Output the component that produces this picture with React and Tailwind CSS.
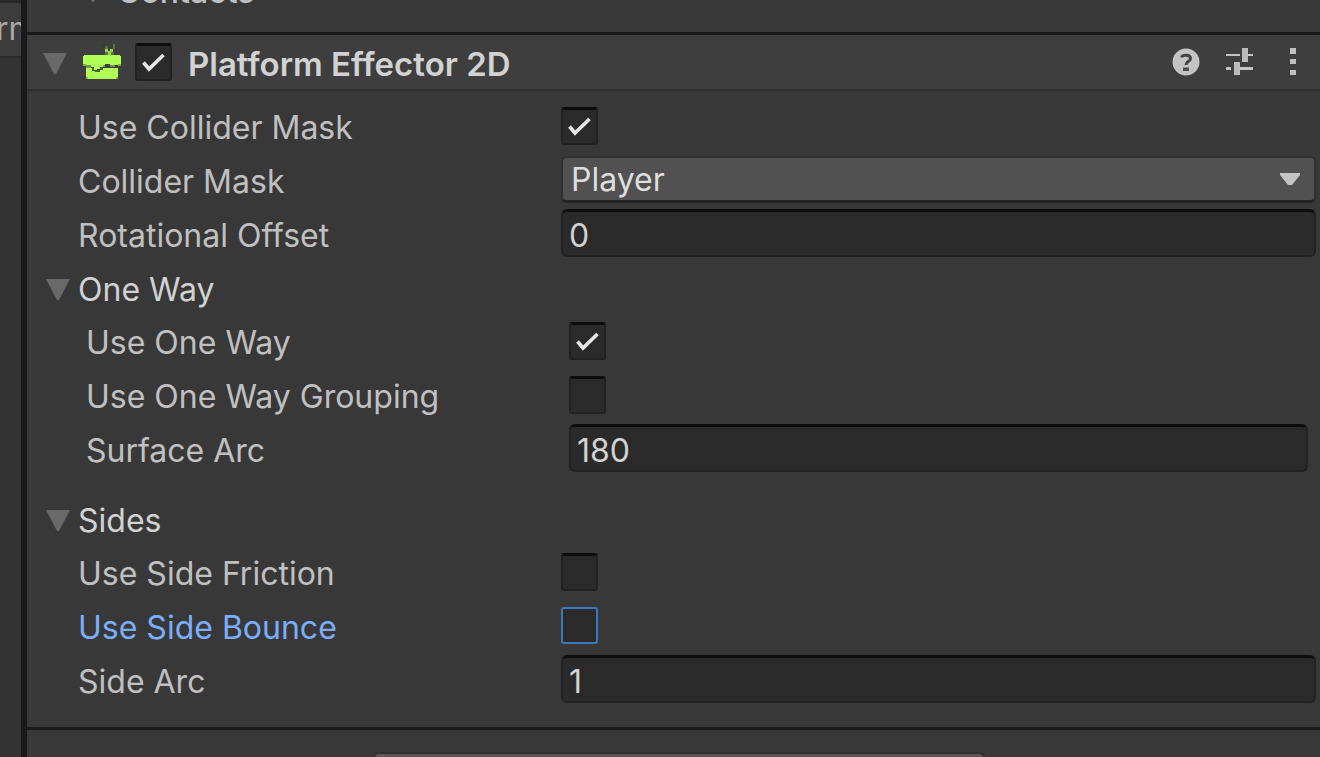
import { useState } from "react";

function Triangle() {
  return (
    <svg viewBox="0 0 24 22" className="h-[22px] w-6 shrink-0" aria-hidden="true">
      <path d="M0 0H24L13 21H11Z" fill="#696969" />
    </svg>
  );
}

function Toggle({ focused, className, ...props }) {
  return (
    <span className={"grid h-[38px] w-[37px] shrink-0 " + (className || "")}>
      <input
        type="checkbox"
        className={
          focused
            ? "peer col-start-1 row-start-1 mb-px appearance-none rounded-[3px] border-2 border-[#3a79bb] bg-[#2a2a2a] outline-none"
            : "peer col-start-1 row-start-1 appearance-none rounded-[3px] border-2 border-t-3 border-[#212121] border-t-[#0d0d0d] bg-[#2a2a2a] outline-none"
        }
        {...props}
      />
      <svg
        viewBox="0 0 37 38"
        className="pointer-events-none invisible col-start-1 row-start-1 size-full peer-checked:visible"
        aria-hidden="true"
      >
        <path d="M8.500 19.500L14 26L28.500 12" fill="none" stroke="#e6e6e6" strokeWidth="3.600" />
      </svg>
    </span>
  );
}

function Row({ id, label, highlighted, children }) {
  return (
    <div className="grid h-12 grid-cols-[483px_minmax(0,1fr)]">
      <label htmlFor={id} className={highlighted ? "pt-[3px] text-[#7baefa]" : "pt-[3px]"}>
        {label}
      </label>
      {children}
    </div>
  );
}

function CheckRow({ id, label, initial = false, focused = false }) {
  const [on, setOn] = useState(initial);
  return (
    <Row id={id} label={label} highlighted={focused}>
      <Toggle id={id} className="mt-1.5" focused={focused} checked={on} onChange={(e) => setOn(e.target.checked)} />
    </Row>
  );
}

function NumberRow({ id, label, initial }) {
  return (
    <Row id={id} label={label}>
      <input
        id={id}
        type="text"
        inputMode="decimal"
        defaultValue={initial}
        className="h-12 w-full min-w-0 rounded-md border-2 border-t-3 border-[#212121] border-t-[#0d0d0d] bg-[#2a2a2a] px-1.5 pt-1 text-[#d2d2d2] outline-none"
      />
    </Row>
  );
}

function Foldout({ title, open, onToggle }) {
  return (
    <button type="button" aria-expanded={open} onClick={onToggle} className="-ml-8 flex h-[47px] items-center gap-2 self-start pt-1.5 text-[#d2d2d2]">
      <Triangle />
      {title}
    </button>
  );
}

function PlatformIcon() {
  return (
    <svg viewBox="0 0 38 36" className="h-9 w-[38px] shrink-0" aria-hidden="true">
      <path d="M1 11H37V12H38V20H37V21H27V20H22V21H20V23H17V25H14V26H11V23H8V21H1V20H0V12H1Z" fill="#b0ff57" />
      <path d="M3 24H9V26H11V27H17V26H20V24H35V33H33V35H5V33H3Z" fill="#b0ff57" />
      <path d="M3 21H8V24H3ZM20 21H22V23H20ZM27 21H32V23H27Z" fill="#6f9846" />
      <path d="M9 24H11V27H9ZM17 23H20V26H17ZM12 26H17V28H12Z" fill="#496033" />
      <path d="M5 33H3V35H5ZM33 33H35V35H33ZM0 20H3V22H0ZM35 20H38V22H35Z" fill="#7fae4a" />
      <path d="M25 11V8H22V5H25V7H27V5H30V8H28V11Z" fill="#93d64c" />
      <path d="M22 8H25V11H22ZM28 8H31V11H28Z" fill="#587539" />
      <path d="M19 0H22V3H19Z" fill="#343e2b" />
      <path d="M22 2H25V5H22ZM30 0H32V5H30Z" fill="#587539" />
    </svg>
  );
}

function HelpIcon() {
  return (
    <svg viewBox="0 0 28 28" className="size-7" aria-hidden="true">
      <circle cx="14" cy="14" r="13.500" fill="#c4c4c4" />
      <path d="M9.500 9.500C10 6.500 18.500 6 18.500 10.500C18.500 13.500 14 13 14 17" fill="none" stroke="#454545" strokeWidth="3" />
      <path d="M11 19.500H17V23H11Z" fill="#505050" />
    </svg>
  );
}

function PresetIcon() {
  return (
    <svg viewBox="0 0 28 28" className="size-7" aria-hidden="true">
      <path d="M0 6H14V8H0ZM22 6H27V8H22ZM0 19H5V22H0ZM14 19H27V22H14Z" fill="#c4c4c4" />
      <path d="M16 0H22V14H16ZM8 14H14V27H8Z" fill="#bcbcbc" />
    </svg>
  );
}

function MenuIcon() {
  return (
    <svg viewBox="0 0 10 28" className="h-7 w-2.5" aria-hidden="true">
      <path d="M2 0H8V6H2ZM2 11H8V16H2ZM2 22H8V27H2Z" fill="#c0c0c0" />
    </svg>
  );
}

export default function App() {
  const [enabled, setEnabled] = useState(true);
  const [oneWay, setOneWay] = useState(true);
  const [sides, setSides] = useState(true);

  return (
    <div className="flex h-screen overflow-hidden bg-[#383838] font-['Inter',sans-serif] text-[32px] leading-[48px] whitespace-nowrap text-[#c0c0c0]">
      <aside className="w-[27px] shrink-0 overflow-hidden border-r-6 border-[#191919] bg-[#333333]">
        <div className="h-[58px] overflow-hidden border-t-3 border-b-2 border-t-[#282828] border-b-[#2a2a2a] bg-[#3c3c3c] pt-0.5 text-[#a8a8a8]">
          <span className="-ml-1">rm</span>
        </div>
      </aside>

      <main className="min-w-0 grow">
        <section className="h-[35px] overflow-hidden border-b-3 border-[#191919]">
          <button type="button" className="-mt-[32px] ml-[54px] flex h-12 items-center gap-3 font-medium">
            <Triangle />
            Contacts
          </button>
        </section>

        <section className="border-b-3 border-[#191919] pb-6">
          <header className="flex h-14 items-center border-b-2 border-[#303030] bg-[#3e3e3e] pr-[22px] pl-4">
            <button type="button" aria-label="Collapse Platform Effector 2D" className="mt-1">
              <Triangle />
            </button>
            <span className="ml-4">
              <PlatformIcon />
            </span>
            <Toggle
              id="enabled"
              className="ml-3.5"
              checked={enabled}
              onChange={(e) => setEnabled(e.target.checked)}
            />
            <label htmlFor="enabled" className="ml-4 pt-1 text-[33px] font-semibold text-[#d2d2d2]">
              Platform Effector 2D
            </label>
            <div className="ml-auto flex items-center gap-[26px]">
              <button type="button" aria-label="Help">
                <HelpIcon />
              </button>
              <button type="button" aria-label="Presets">
                <PresetIcon />
              </button>
              <button type="button" aria-label="More options" className="ml-2">
                <MenuIcon />
              </button>
            </div>
          </header>

          <div className="flex flex-col gap-1.5 pt-2.5 pr-1 pl-[51px]">
            <CheckRow id="use-mask" label="Use Collider Mask" initial />
            <Row id="mask" label="Collider Mask">
              <div className="mt-px grid h-[47px] grid-rows-1">
                <select
                  id="mask"
                  defaultValue="Player"
                  className="col-start-1 row-start-1 h-[47px] w-full appearance-none rounded-md border-2 border-b-3 border-[#303030] border-b-[#242424] bg-[#515151] px-2 pt-0.5 leading-10 text-[#dedede] outline-none"
                >
                  <option>Player</option>
                </select>
                <svg
                  viewBox="0 0 20 14"
                  className="pointer-events-none col-start-1 row-start-1 mr-4 h-3.5 w-5 self-center justify-self-end"
                  aria-hidden="true"
                >
                  <path d="M0 0H20V2L12 12H8L0 2Z" fill="#c4c4c4" />
                </svg>
              </div>
            </Row>
            <NumberRow id="rotation" label="Rotational Offset" initial="0" />

            <Foldout title="One Way" open={oneWay} onToggle={() => setOneWay(!oneWay)} />
            {oneWay && (
              <div className="flex flex-col gap-1.5 px-2">
                <CheckRow id="use-one-way" label="Use One Way" initial />
                <CheckRow id="one-way-grouping" label="Use One Way Grouping" />
                <NumberRow id="surface-arc" label="Surface Arc" initial="180" />
              </div>
            )}

            <div className="mt-4 flex flex-col gap-1.5">
              <Foldout title="Sides" open={sides} onToggle={() => setSides(!sides)} />
              {sides && (
                <>
                  <CheckRow id="side-friction" label="Use Side Friction" />
                  <CheckRow id="side-bounce" label="Use Side Bounce" focused />
                  <NumberRow id="side-arc" label="Side Arc" initial="1" />
                </>
              )}
            </div>
          </div>
        </section>

        <footer className="flex justify-center pt-[22px] pl-2.5">
          <button
            type="button"
            aria-label="Add Component"
            className="h-12 w-[612px] rounded-md border-2 border-[#303030] bg-[#585858]"
          />
        </footer>
      </main>
    </div>
  );
}
